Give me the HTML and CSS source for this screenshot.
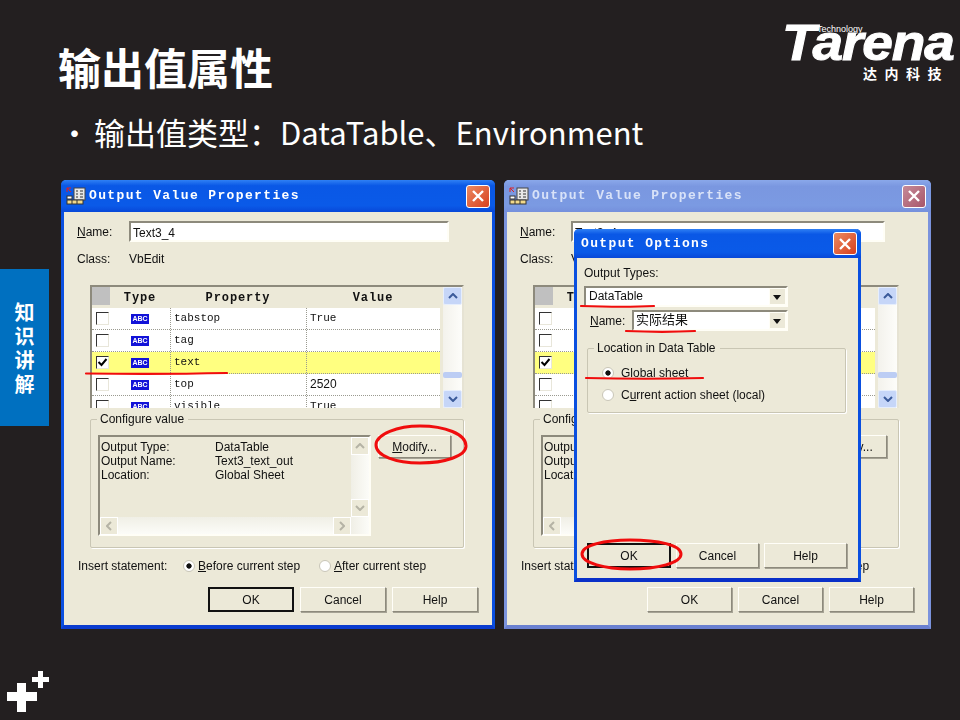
FILE: index.html
```html
<!DOCTYPE html>
<html lang="zh-CN">
<head>
    <meta charset="UTF-8">
    <title>输出值属性</title>
    <link rel="stylesheet" href="styles.css">
</head>
<body>
<div class="slide">
    <div class="logo">
        <span class="logo-tech">Technology</span>
        <span class="logo-name">Tarena</span>
        <span class="logo-cn">达内科技</span>
    </div>
    <div class="side-tab"><span>知</span><span>识</span><span>讲</span><span>解</span></div>
    <svg class="plus" width="44" height="42" viewBox="0 0 44 42">
        <path fill="#fff" d="M10 12h9v9h11v9H19v11h-9V30H0v-9h10z"/>
        <path fill="#fff" d="M31 0h5v6h6v5h-6v6h-5v-6h-6V6h6z"/>
    </svg>

    <h1 class="title">输出值属性</h1>
    <p class="bullet"><span class="dot">•</span>输出值类型：DataTable、Environment</p>

    <div class="windows">
        <!-- left dialog -->
        <div class="win win-left">
            <div class="titlebar">
                <svg class="app-icon" width="20" height="18" viewBox="0 0 20 18">
                    <rect x="8" y="1" width="11" height="12" fill="#e8e8e8" stroke="#444"/>
                    <path d="M10 4h2M14 4h3M10 7h2M14 7h3M10 10h2M14 10h3" stroke="#333"/>
                    <rect x="1" y="9" width="5" height="3" fill="#fff" stroke="#333"/>
                    <rect x="1" y="13" width="16" height="4" fill="#f2d98a" stroke="#333"/>
                    <path d="M6 13v4M11 13v4" stroke="#333"/>
                    <path d="M1 1l4 4M1 5V1h4" stroke="#e02020" fill="none"/>
                </svg>
                <span class="win-title">Output Value Properties</span>
                <span class="close"><svg width="14" height="14" viewBox="0 0 14 14"><path d="M2 2l10 10M12 2L2 12" stroke="#fff" stroke-width="2.4"/></svg></span>
            </div>
            <div class="row-name">
                <label class="lbl-name"><u>N</u>ame:</label>
                <div class="textbox">Text3_4</div>
            </div>
            <div class="row-class"><span class="lbl-name">Class:</span><span>VbEdit</span></div>

            <div class="grid-box">
                <div class="grid-rows">
                    <div class="grid-row grid-head"><span class="corner"></span><span>Type</span><span>Property</span><span>Value</span></div>
                    <div class="grid-row"><span class="cell-check"><i class="check"></i></span><span class="cell-type"><b class="abc">ABC</b></span><span>tabstop</span><span>True</span></div>
                    <div class="grid-row"><span class="cell-check"><i class="check"></i></span><span class="cell-type"><b class="abc">ABC</b></span><span>tag</span><span></span></div>
                    <div class="grid-row is-on"><span class="cell-check"><i class="check"><svg width="11" height="11" viewBox="0 0 11 11"><path d="M1.500 5l3 3 5-6" fill="none" stroke="#000" stroke-width="2"/></svg></i></span><span class="cell-type"><b class="abc">ABC</b></span><span>text</span><span></span></div>
                    <div class="grid-row"><span class="cell-check"><i class="check"></i></span><span class="cell-type"><b class="abc">ABC</b></span><span>top</span><span class="num">2520</span></div>
                    <div class="grid-row"><span class="cell-check"><i class="check"></i></span><span class="cell-type"><b class="abc">ABC</b></span><span>visible</span><span>True</span></div>
                </div>
                <div class="vscroll">
                    <span class="sbtn"><svg width="10" height="6" viewBox="0 0 10 6"><path d="M1 5l4-4 4 4" fill="none" stroke="#3a5a9a" stroke-width="2"/></svg></span>
                    <span class="track"><span class="thumb"></span></span>
                    <span class="sbtn"><svg width="10" height="6" viewBox="0 0 10 6"><path d="M1 1l4 4 4-4" fill="none" stroke="#3a5a9a" stroke-width="2"/></svg></span>
                </div>
            </div>

            <div class="group group-config">
                <span class="legend">Configure value</span>
                <div class="listbox">
                    <div class="list-main">
                        <div class="list-text">
                            <div class="list-line"><span>Output Type:</span><span>DataTable</span></div>
                            <div class="list-line"><span>Output Name:</span><span>Text3_text_out</span></div>
                            <div class="list-line"><span>Location:</span><span>Global Sheet</span></div>
                        </div>
                        <div class="hscroll">
                            <span class="gbtn"><svg width="6" height="10" viewBox="0 0 6 10"><path d="M5 1L1 5l4 4" fill="none" stroke="#b5b3a5" stroke-width="2"/></svg></span>
                            <span class="gbtn"><svg width="6" height="10" viewBox="0 0 6 10"><path d="M1 1l4 4-4 4" fill="none" stroke="#b5b3a5" stroke-width="2"/></svg></span>
                        </div>
                    </div>
                    <div class="list-side">
                        <span class="gbtn"><svg width="10" height="6" viewBox="0 0 10 6"><path d="M1 5l4-4 4 4" fill="none" stroke="#b5b3a5" stroke-width="2"/></svg></span>
                        <span class="gbtn"><svg width="10" height="6" viewBox="0 0 10 6"><path d="M1 1l4 4 4-4" fill="none" stroke="#b5b3a5" stroke-width="2"/></svg></span>
                    </div>
                </div>
                <button class="btn btn-modify"><u>M</u>odify...</button>
            </div>

            <div class="row-insert">
                <span class="insert-label">Insert statement:</span>
                <i class="radio on"></i><span class="insert-opt"><u>B</u>efore current step</span>
                <i class="radio"></i><span><u>A</u>fter current step</span>
            </div>
            <div class="row-btns">
                <button class="btn is-default">OK</button>
                <button class="btn">Cancel</button>
                <button class="btn">Help</button>
            </div>
        </div>

        <!-- right dialog, inactive, with Output Options on top -->
        <div class="win win-right">
            <div class="titlebar">
                <svg class="app-icon" width="20" height="18" viewBox="0 0 20 18">
                    <rect x="8" y="1" width="11" height="12" fill="#e8e8e8" stroke="#444"/>
                    <path d="M10 4h2M14 4h3M10 7h2M14 7h3M10 10h2M14 10h3" stroke="#333"/>
                    <rect x="1" y="9" width="5" height="3" fill="#fff" stroke="#333"/>
                    <rect x="1" y="13" width="16" height="4" fill="#f2d98a" stroke="#333"/>
                    <path d="M6 13v4M11 13v4" stroke="#333"/>
                    <path d="M1 1l4 4M1 5V1h4" stroke="#e02020" fill="none"/>
                </svg>
                <span class="win-title">Output Value Properties</span>
                <span class="close"><svg width="14" height="14" viewBox="0 0 14 14"><path d="M2 2l10 10M12 2L2 12" stroke="#fff" stroke-width="2.4"/></svg></span>
            </div>
            <div class="row-name">
                <label class="lbl-name"><u>N</u>ame:</label>
                <div class="textbox">Text3_4</div>
            </div>
            <div class="row-class"><span class="lbl-name">Class:</span><span>VbEdit</span></div>

            <div class="grid-box">
                <div class="grid-rows">
                    <div class="grid-row grid-head"><span class="corner"></span><span>Type</span><span>Property</span><span>Value</span></div>
                    <div class="grid-row"><span class="cell-check"><i class="check"></i></span><span class="cell-type"></span><span></span><span></span></div>
                    <div class="grid-row"><span class="cell-check"><i class="check"></i></span><span class="cell-type"></span><span></span><span></span></div>
                    <div class="grid-row is-on"><span class="cell-check"><i class="check"><svg width="11" height="11" viewBox="0 0 11 11"><path d="M1.500 5l3 3 5-6" fill="none" stroke="#000" stroke-width="2"/></svg></i></span><span class="cell-type"></span><span></span><span></span></div>
                    <div class="grid-row"><span class="cell-check"><i class="check"></i></span><span class="cell-type"></span><span></span><span></span></div>
                    <div class="grid-row"><span class="cell-check"><i class="check"></i></span><span class="cell-type"></span><span></span><span></span></div>
                </div>
                <div class="vscroll">
                    <span class="sbtn"><svg width="10" height="6" viewBox="0 0 10 6"><path d="M1 5l4-4 4 4" fill="none" stroke="#3a5a9a" stroke-width="2"/></svg></span>
                    <span class="track"><span class="thumb"></span></span>
                    <span class="sbtn"><svg width="10" height="6" viewBox="0 0 10 6"><path d="M1 1l4 4 4-4" fill="none" stroke="#3a5a9a" stroke-width="2"/></svg></span>
                </div>
            </div>

            <div class="group group-config">
                <span class="legend">Configure value</span>
                <div class="listbox">
                    <div class="list-main">
                        <div class="list-text">
                            <div class="list-line"><span>Output Type:</span></div>
                            <div class="list-line"><span>Output Name:</span></div>
                            <div class="list-line"><span>Location:</span></div>
                        </div>
                        <div class="hscroll">
                            <span class="gbtn"><svg width="6" height="10" viewBox="0 0 6 10"><path d="M5 1L1 5l4 4" fill="none" stroke="#b5b3a5" stroke-width="2"/></svg></span>
                        </div>
                    </div>
                </div>
                <button class="btn btn-modify"><u>M</u>odify...</button>
            </div>

            <div class="row-insert">
                <span class="insert-label">Insert statement:</span>
                <i class="radio on"></i><span class="insert-opt"><u>B</u>efore current step</span>
                <i class="radio"></i><span><u>A</u>fter current step</span>
            </div>
            <div class="row-btns">
                <button class="btn">OK</button>
                <button class="btn">Cancel</button>
                <button class="btn">Help</button>
            </div>

            <div class="options">
                <div class="titlebar">
                    <span class="win-title">Output Options</span>
                    <span class="close"><svg width="14" height="14" viewBox="0 0 14 14"><path d="M2 2l10 10M12 2L2 12" stroke="#fff" stroke-width="2.4"/></svg></span>
                </div>
                <div class="opt-label">Output Types:</div>
                <div class="combo combo-type"><span class="combo-text">DataTable</span><span class="combo-arrow"></span></div>
                <div class="opt-name-row">
                    <label><u>N</u>ame:</label>
                    <div class="combo combo-name"><span class="combo-text">实际结果</span><span class="combo-arrow"></span></div>
                </div>
                <div class="group group-loc">
                    <span class="legend">Location in Data Table</span>
                    <div class="loc-row"><i class="radio on"></i><span>Global sheet</span></div>
                    <div class="loc-row"><i class="radio"></i><span>C<u>u</u>rrent action sheet (local)</span></div>
                </div>
                <div class="row-btns">
                    <button class="btn is-default">OK</button>
                    <button class="btn">Cancel</button>
                    <button class="btn">Help</button>
                </div>
            </div>
        </div>
    </div>

    <!-- red pen marks -->
    <svg class="marks" width="960" height="720" viewBox="0 0 960 720">
        <g fill="none" stroke="#f00d0d" stroke-width="2.200" stroke-linecap="round">
            <path d="M86 373.500C130 374 180 374 227 373"/>
            <path d="M581 306C610 307 635 307 654 306"/>
            <path d="M626 331C650 332 675 332 695 331"/>
            <path d="M586 378C625 379 665 379 703 378"/>
            <path stroke-width="3" d="M376 445C376 434 398 426 420 426C445 426 466 434 466 446C466 456 445 463 420 463C396 463 376 456 376 445Z"/>
            <path stroke-width="3" d="M582 554C582 545 605 540 630 540C658 540 681 545 681 554C681 563 658 569 630 569C605 569 582 563 582 554Z"/>
        </g>
    </svg>
</div>
</body>
</html>
```

FILE: styles.css
```css
html, body {
    margin: 0;
    padding: 0;
}
.slide {
    position: relative;
    width: 960px;
    height: 720px;
    overflow: hidden;
    background: #231f20;
    font-family: "Noto Sans CJK SC", "Noto Sans", sans-serif;
    color: #fff;
}
.title {
    margin: 0;
    padding: 35px 0 0 58px;
    font-size: 43px;
    line-height: 62px;
    font-weight: 700;
}
.bullet {
    margin: 0;
    padding: 12px 0 0 59px;
    font-size: 31px;
    line-height: 46px;
    display: flex;
}
.dot {
    width: 35px;
}

/* logo */
.logo {
    position: absolute;
    left: 782px;
    top: 22px;
    width: 164px;
    height: 60px;
}
.logo-name {
    position: absolute;
    left: 0;
    top: -4px;
    font-family: "Liberation Sans", sans-serif;
    font-weight: 700;
    font-style: italic;
    font-size: 50px;
    line-height: 50px;
    letter-spacing: -1px;
    -webkit-text-stroke: 1px #fff;
    transform: scaleX(1.1);
    transform-origin: left top;
}
.logo-tech {
    position: absolute;
    left: 35px;
    top: 2px;
    font-family: "Liberation Sans", sans-serif;
    font-size: 9px;
    line-height: 11px;
}
.logo-cn {
    position: absolute;
    left: 81px;
    top: 42px;
    font-size: 14px;
    line-height: 18px;
    font-weight: 700;
    letter-spacing: 7.500px;
    white-space: nowrap;
}

/* left tab */
.side-tab {
    position: absolute;
    left: 0;
    top: 269px;
    width: 49px;
    height: 157px;
    background: #0070c0;
    display: flex;
    flex-direction: column;
    align-items: center;
    justify-content: center;
    font-size: 20px;
    line-height: 24px;
    font-weight: 700;
}
.plus {
    position: absolute;
    left: 7px;
    top: 671px;
}

/* dialogs */
.windows {
    position: absolute;
    left: 61px;
    top: 180px;
    display: flex;
    gap: 9px;
}
.win {
    position: relative;
    box-sizing: border-box;
    height: 449px;
    background: #ece9d8;
    border: 3px solid #0a4fe0;
    border-top: 0;
    border-bottom: 4px solid #0a3ccf;
    border-radius: 5px 5px 0 0;
    color: #111;
    font-family: "Liberation Sans", Arial, sans-serif;
    font-size: 12px;
    line-height: 14px;
    filter: blur(0.35px);
}
.win-left {
    width: 434px;
}
.win-right {
    width: 427px;
    border-color: #7b93dd;
    border-bottom-color: #6a80d0;
}
.titlebar {
    display: flex;
    align-items: center;
    height: 32px;
    margin: 0 -3px;
    padding: 0 5px 0 5px;
    border-radius: 5px 5px 0 0;
    background: linear-gradient(#2f80f4, #0a58e6 18%, #0a5ae8 80%, #0848d8);
}
.win-right > .titlebar {
    background: linear-gradient(#8aa8ea, #7a97e0 20%, #7b9ae2 80%, #7590dc);
}
.win-right > .titlebar .win-title {
    color: #d8e2f8;
}
.win-right > .titlebar .close {
    background: linear-gradient(135deg, #c58a98, #a8566a);
}
.app-icon {
    flex: none;
    margin-right: 3px;
}
.win-title {
    flex: 1;
    color: #fff;
    font-family: "Liberation Mono", monospace;
    font-weight: 700;
    font-size: 13px;
    letter-spacing: 1.370px;
    white-space: nowrap;
}
.close {
    flex: none;
    box-sizing: border-box;
    width: 24px;
    height: 23px;
    display: flex;
    align-items: center;
    justify-content: center;
    border: 1px solid #fff;
    border-radius: 3px;
    background: linear-gradient(135deg, #eb8a60, #d8401f);
}
.row-name {
    display: flex;
    align-items: center;
    margin: 9px 0 0 13px;
}
.lbl-name {
    width: 52px;
    flex: none;
}
.textbox {
    box-sizing: border-box;
    width: 320px;
    height: 21px;
    padding: 3px 2px;
    background: #fff;
    border: 2px solid;
    border-color: #8d8a7c #fffef6 #fffef6 #8d8a7c;
    font-size: 12px;
}
.row-class {
    display: flex;
    margin: 10px 0 0 13px;
}
.win-right .lbl-name {
    width: 51px;
}
.win-right .textbox {
    width: 314px;
}

/* property grid */
.grid-box {
    box-sizing: border-box;
    display: flex;
    gap: 3px;
    width: 374px;
    height: 123px;
    margin: 19px 0 0 26px;
    border: 2px solid;
    border-bottom: 0;
    border-color: #8d8a7c #e6e3d4 #fff #8d8a7c;
    overflow: hidden;
}
.win-right .grid-box {
    width: 366px;
    margin-left: 26px;
}
.grid-rows {
    flex: 1;
    min-width: 0;
}
.grid-row {
    display: grid;
    grid-template-columns: 18px 60px 136px 1fr;
    height: 22px;
    box-sizing: border-box;
    background: #fff;
    border-bottom: 1px dotted #9a9a90;
    font-family: "Liberation Mono", monospace;
    font-size: 11px;
    line-height: 21px;
}
.grid-row > span + span + span {
    border-left: 1px dotted #9a9a90;
    padding-left: 3px;
}
.grid-row.is-on {
    background: #ffff80;
}
.num {
    font-family: "Liberation Sans", sans-serif;
    font-size: 12px;
}
.grid-head {
    height: 21px;
    background: #ece9d8;
    border-bottom: 0;
    font-weight: 700;
    font-size: 12px;
    letter-spacing: 0.900px;
    line-height: 22px;
    text-align: center;
}
.grid-head > span + span + span {
    border-left: 0;
    padding: 0;
}
.corner {
    width: 18px;
    height: 18px;
    background: #c0c0c0;
}
.cell-check {
    display: flex;
    align-items: center;
    padding-left: 4px;
}
.check {
    box-sizing: border-box;
    width: 13px;
    height: 13px;
    background: #fff;
    border: 1px solid;
    border-color: #333 #e8e6da #e8e6da #333;
    display: block;
}
.check svg {
    display: block;
}
.cell-type {
    display: flex;
    align-items: center;
    padding-left: 21px;
}
.abc {
    width: 18px;
    height: 10px;
    background: #1212d8;
    color: #fff;
    font-family: "Liberation Sans", sans-serif;
    font-size: 7px;
    line-height: 10px;
    letter-spacing: 0;
    text-align: center;
}
.vscroll {
    flex: none;
    width: 19px;
    display: flex;
    flex-direction: column;
    background: linear-gradient(90deg, #f3f2ec, #fdfdfa);
}
.sbtn {
    flex: none;
    height: 18px;
    border-radius: 2px;
    background: #c6d6f8;
    border: 1px solid #e6eefc;
    box-sizing: border-box;
    display: flex;
    align-items: center;
    justify-content: center;
}
.track {
    flex: 1;
}
.thumb {
    display: block;
    height: 6px;
    margin-top: 67px;
    background: #bccdf4;
    border-radius: 2px;
}

/* group boxes */
.group {
    position: relative;
    box-sizing: border-box;
    border: 1px solid #c9c6b4;
    box-shadow: 1px 1px 0 #fff;
    border-radius: 2px;
}
.legend {
    position: absolute;
    left: 6px;
    top: -8px;
    padding: 0 4px 0 3px;
    background: #ece9d8;
}
.group-config {
    display: flex;
    align-items: flex-start;
    gap: 7px;
    width: 374px;
    height: 129px;
    margin: 11px 0 0 26px;
    padding: 15px 0 0 7px;
}
.win-right .group-config {
    width: 366px;
    gap: 0;
    justify-content: space-between;
    padding-right: 11px;
}
.listbox {
    box-sizing: border-box;
    display: flex;
    width: 273px;
    height: 101px;
    border: 2px solid;
    border-color: #8d8a7c #fffef6 #fffef6 #8d8a7c;
}
.list-main {
    flex: 1;
    display: flex;
    flex-direction: column;
}
.list-text {
    flex: 1;
    padding: 3px 0 0 1px;
}
.list-line {
    display: flex;
}
.list-line span:first-child {
    width: 114px;
}
.hscroll {
    flex: none;
    height: 17px;
    display: flex;
    justify-content: space-between;
    background: linear-gradient(#f0efe6, #fcfcf8);
}
.list-side {
    flex: none;
    width: 18px;
    display: flex;
    flex-direction: column;
    justify-content: space-between;
    padding-bottom: 17px;
    background: linear-gradient(90deg, #f0efe6, #fcfcf8);
}
.gbtn {
    box-sizing: border-box;
    flex: none;
    width: 18px;
    height: 18px;
    background: #ece9d8;
    border: 1px solid #fff;
    display: flex;
    align-items: center;
    justify-content: center;
}
.btn {
    box-sizing: border-box;
    width: 86px;
    height: 25px;
    padding: 0;
    background: #ece9d8;
    border: 1px solid;
    border-color: #fffef8 #8d8a7c #8d8a7c #fffef8;
    box-shadow: 1px 1px 0 #a5a294;
    color: #111;
    font-family: "Liberation Sans", Arial, sans-serif;
    font-size: 12px;
}
.btn.is-default {
    border: 2px solid #111;
    box-shadow: none;
}
.btn-modify {
    width: 73px;
    height: 23px;
}
.row-insert {
    display: flex;
    align-items: center;
    margin: 11px 0 0 14px;
    height: 14px;
}
.insert-label {
    width: 105px;
}
.insert-opt {
    width: 121px;
}
.radio {
    box-sizing: border-box;
    width: 12px;
    height: 12px;
    margin-right: 3px;
    border-radius: 50%;
    background: #fff;
    border: 1px solid #c9c6b8;
    display: block;
    flex: none;
}
.radio.on {
    background: radial-gradient(circle, #111 0, #111 2.300px, #fff 3px);
}
.row-btns {
    display: flex;
    justify-content: flex-end;
    gap: 6px;
    margin: 14px 14px 0 0;
}
.win-right .row-btns .btn {
    width: 85px;
}

/* Output Options dialog on top of the right window */
.options {
    position: absolute;
    left: 67px;
    top: 49px;
    box-sizing: border-box;
    width: 287px;
    height: 353px;
    padding: 0 3px;
    background: #ece9d8;
    border: 3px solid #0a4fe0;
    border-top: 0;
    border-bottom: 4px solid #0a30c8;
    border-radius: 5px 5px 0 0;
}
.options .titlebar {
    height: 29px;
    margin: 0 -6px;
    padding: 0 4px 0 7px;
}
.opt-label {
    margin: 8px 0 0 4px;
}
.combo {
    box-sizing: border-box;
    display: flex;
    height: 21px;
    background: #fff;
    border: 2px solid;
    border-color: #8d8a7c #fffef6 #fffef6 #8d8a7c;
}
.combo-type {
    width: 204px;
    margin: 6px 0 0 4px;
}
.combo-text {
    flex: 1;
    padding: 1px 0 0 3px;
    font-size: 12px;
    font-family: "Liberation Sans", "Noto Sans CJK SC", sans-serif;
}
.combo-name .combo-text {
    padding-left: 2px;
    font-size: 13px;
}
.combo-arrow {
    flex: none;
    position: relative;
    width: 17px;
    background: #ece9d8;
    border: 1px solid #fffef6;
    box-sizing: border-box;
}
.combo-arrow::after {
    content: "";
    position: absolute;
    left: 3px;
    top: 6px;
    border: 4px solid transparent;
    border-top: 5px solid #111;
    border-bottom: 0;
}
.opt-name-row {
    display: flex;
    align-items: center;
    margin: 3px 0 0 10px;
}
.opt-name-row label {
    width: 42px;
}
.combo-name {
    width: 156px;
}
.group-loc {
    width: 259px;
    height: 65px;
    margin: 17px 0 0 7px;
    padding-top: 13px;
}
.loc-row {
    display: flex;
    align-items: center;
    height: 22px;
    padding-left: 14px;
}
.loc-row .radio {
    margin-right: 7px;
}
.options .row-btns {
    position: absolute;
    left: 10px;
    top: 314px;
    margin: 0;
    gap: 5px;
}
.options .row-btns .btn {
    width: 84px;
}
.options .row-btns .btn + .btn {
    width: 83px;
}

.marks {
    position: absolute;
    left: 0;
    top: 0;
    pointer-events: none;
}
```
